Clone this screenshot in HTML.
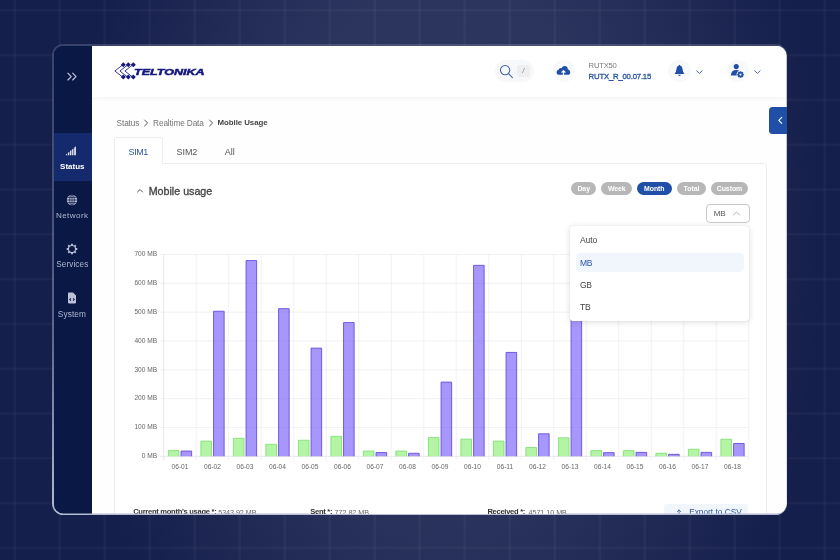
<!DOCTYPE html>
<html lang="en">
<head>
<meta charset="utf-8">
<title>Mobile Usage - Teltonika</title>
<style>
*{box-sizing:border-box;margin:0;padding:0}
html,body{width:840px;height:560px;overflow:hidden}
body{position:relative;font-family:"Liberation Sans",sans-serif;background:#151f4b;color:#444}
.abs{position:absolute}
#bg{position:absolute;left:0;top:0;width:840px;height:560px;
 background:radial-gradient(ellipse 375px 600px at 448px 235px, #2e3760 0%, #2c355e 42%, #1e2853 76%, #151f4b 100%)}
#grid{position:absolute;left:0;top:0;width:840px;height:560px}
#winborder{position:absolute;left:51.8px;top:44.4px;width:735.3px;height:470.8px;border-radius:11.5px;
 background:linear-gradient(to bottom, rgba(200,206,230,.20) 0%, rgba(200,206,230,.28) 33%, rgba(200,206,230,.42) 63%, rgba(210,215,235,.85) 100%)}
#win{position:absolute;left:0;top:0;width:840px;height:560px;overflow:hidden;will-change:transform;
 clip-path:inset(45.8px 53.30px 46.40px 53.8px round 9.5px 10px 10px 9.5px)}
#side{position:absolute;left:53.8px;top:45.8px;width:38.20px;height:467.80px;background:#0a1846}
#main{position:absolute;left:92.0px;top:45.8px;width:694.70px;height:467.80px;background:#fefefe}
#header{position:absolute;left:92.0px;top:45.8px;width:694.70px;height:51.2px;background:#fff;box-shadow:0 1px 5px rgba(0,0,0,.055)}
.t{position:absolute;white-space:nowrap;line-height:1}
.pill{height:13.1px;border-radius:6.6px;color:#fff;font-weight:700;font-size:6.95px;line-height:13.1px;text-align:center;letter-spacing:-.05px}
</style>
</head>
<body>
<div id="bg"></div>
<svg id="grid" viewBox="0 0 840 560"><g stroke="#ffffff" stroke-opacity=".036" stroke-width="2.6" style="filter:blur(.7px)"><line x1="14.7" y1="0" x2="14.7" y2="560"/><line x1="59.7" y1="0" x2="59.7" y2="560"/><line x1="104.7" y1="0" x2="104.7" y2="560"/><line x1="149.7" y1="0" x2="149.7" y2="560"/><line x1="194.7" y1="0" x2="194.7" y2="560"/><line x1="239.7" y1="0" x2="239.7" y2="560"/><line x1="284.7" y1="0" x2="284.7" y2="560"/><line x1="329.7" y1="0" x2="329.7" y2="560"/><line x1="374.7" y1="0" x2="374.7" y2="560"/><line x1="419.7" y1="0" x2="419.7" y2="560"/><line x1="464.7" y1="0" x2="464.7" y2="560"/><line x1="509.7" y1="0" x2="509.7" y2="560"/><line x1="554.7" y1="0" x2="554.7" y2="560"/><line x1="599.7" y1="0" x2="599.7" y2="560"/><line x1="644.7" y1="0" x2="644.7" y2="560"/><line x1="689.7" y1="0" x2="689.7" y2="560"/><line x1="734.7" y1="0" x2="734.7" y2="560"/><line x1="779.7" y1="0" x2="779.7" y2="560"/><line x1="824.7" y1="0" x2="824.7" y2="560"/><line x1="0" y1="10.3" x2="840" y2="10.3"/><line x1="0" y1="55.1" x2="840" y2="55.1"/><line x1="0" y1="99.9" x2="840" y2="99.9"/><line x1="0" y1="144.7" x2="840" y2="144.7"/><line x1="0" y1="189.5" x2="840" y2="189.5"/><line x1="0" y1="234.3" x2="840" y2="234.3"/><line x1="0" y1="279.1" x2="840" y2="279.1"/><line x1="0" y1="323.9" x2="840" y2="323.9"/><line x1="0" y1="368.7" x2="840" y2="368.7"/><line x1="0" y1="413.5" x2="840" y2="413.5"/><line x1="0" y1="458.3" x2="840" y2="458.3"/><line x1="0" y1="503.1" x2="840" y2="503.1"/><line x1="0" y1="547.9" x2="840" y2="547.9"/></g></svg>
<div id="winborder"></div>
<div id="win">
<div id="main"></div>
<div id="content">
<div class="t" style="left:116.60px;top:118.57px;font-size:8.3px;color:#767676;letter-spacing:-0.15px;">Status</div>
<svg class="abs" style="left:143.30px;top:118.90px;" width="6" height="8" viewBox="0 0 6 8"><path d="M1.6 1 L4.6 4 L1.6 7" fill="none" stroke="#555" stroke-width="1" stroke-linecap="round" stroke-linejoin="round"/></svg>
<div class="t" style="left:153.10px;top:118.57px;font-size:8.3px;color:#767676;letter-spacing:-0.15px;">Realtime Data</div>
<svg class="abs" style="left:208.00px;top:118.90px;" width="6" height="8" viewBox="0 0 6 8"><path d="M1.6 1 L4.6 4 L1.6 7" fill="none" stroke="#555" stroke-width="1" stroke-linecap="round" stroke-linejoin="round"/></svg>
<div class="t" style="left:217.60px;top:118.95px;font-size:7.85px;color:#444;font-weight:700;letter-spacing:-0.05px;">Mobile Usage</div>
<div class="abs" style="left:114.10px;top:163.00px;width:653.10px;height:397.00px;background:#fff;border:1px solid #ededf0;border-radius:0 3px 0 0"></div>
<div class="abs" style="left:114.10px;top:137.40px;width:49.10px;height:26.80px;background:#fff;border:1px solid #ededf0;border-bottom:none;border-radius:3px 3px 0 0"></div>
<div class="t" style="left:128.60px;top:147.68px;font-size:9.0px;color:#2a55a4;letter-spacing:-0.42px;">SIM1</div>
<div class="t" style="left:176.60px;top:147.68px;font-size:9.0px;color:#555;letter-spacing:-0.1px;">SIM2</div>
<div class="t" style="left:224.80px;top:147.68px;font-size:9.0px;color:#555;">All</div>
<svg class="abs" style="left:135.80px;top:186.80px;" width="8" height="7" viewBox="0 0 8 7"><path d="M1.5 5.0 L4 2.5 L6.5 5.0" fill="none" stroke="#444" stroke-width=".95" stroke-linecap="round" stroke-linejoin="round"/></svg>
<div class="t" style="left:148.70px;top:185.74px;font-size:10.7px;color:#444;-webkit-text-stroke:.32px #444;">Mobile usage</div>
<div class="abs pill" style="left:571.00px;top:182.10px;width:25.40px;background:#b7b7b7">Day</div>
<div class="abs pill" style="left:601.20px;top:182.10px;width:31.20px;background:#b7b7b7">Week</div>
<div class="abs pill" style="left:636.90px;top:182.10px;width:34.80px;background:#1f4fa6">Month</div>
<div class="abs pill" style="left:676.90px;top:182.10px;width:29.10px;background:#b7b7b7">Total</div>
<div class="abs pill" style="left:710.70px;top:182.10px;width:37.60px;background:#b7b7b7">Custom</div>
<div class="abs" style="left:706.30px;top:204.20px;width:43.30px;height:18.50px;background:#fff;border:1px solid #c9c9cd;border-radius:4px"></div>
<div class="t" style="left:713.70px;top:210.04px;font-size:8.1px;color:#555;letter-spacing:-0.1px;">MB</div>
<svg class="abs" style="left:732.30px;top:209.60px;" width="9" height="7" viewBox="0 0 9 7"><path d="M1.4 4.9 L4.5 2.1 L7.6 4.9" fill="none" stroke="#a0a0a0" stroke-width=".8" stroke-linecap="round" stroke-linejoin="round"/></svg>
<svg class="abs" style="left:0;top:0" width="840" height="560" viewBox="0 0 840 560"><line x1="159.55" y1="456.30" x2="748.75" y2="456.30" stroke="#d9d9d9" stroke-width=".6"/><line x1="159.55" y1="427.47" x2="748.75" y2="427.47" stroke="#e9e9e9" stroke-width=".6"/><line x1="159.55" y1="398.64" x2="748.75" y2="398.64" stroke="#e9e9e9" stroke-width=".6"/><line x1="159.55" y1="369.81" x2="748.75" y2="369.81" stroke="#e9e9e9" stroke-width=".6"/><line x1="159.55" y1="340.99" x2="748.75" y2="340.99" stroke="#e9e9e9" stroke-width=".6"/><line x1="159.55" y1="312.16" x2="748.75" y2="312.16" stroke="#e9e9e9" stroke-width=".6"/><line x1="159.55" y1="283.33" x2="748.75" y2="283.33" stroke="#e9e9e9" stroke-width=".6"/><line x1="159.55" y1="254.50" x2="748.75" y2="254.50" stroke="#e9e9e9" stroke-width=".6"/><line x1="163.75" y1="254.50" x2="163.75" y2="460.50" stroke="#d9d9d9" stroke-width=".6"/><line x1="196.25" y1="254.50" x2="196.25" y2="460.50" stroke="#e9e9e9" stroke-width=".6"/><line x1="228.75" y1="254.50" x2="228.75" y2="460.50" stroke="#e9e9e9" stroke-width=".6"/><line x1="261.25" y1="254.50" x2="261.25" y2="460.50" stroke="#e9e9e9" stroke-width=".6"/><line x1="293.75" y1="254.50" x2="293.75" y2="460.50" stroke="#e9e9e9" stroke-width=".6"/><line x1="326.25" y1="254.50" x2="326.25" y2="460.50" stroke="#e9e9e9" stroke-width=".6"/><line x1="358.75" y1="254.50" x2="358.75" y2="460.50" stroke="#e9e9e9" stroke-width=".6"/><line x1="391.25" y1="254.50" x2="391.25" y2="460.50" stroke="#e9e9e9" stroke-width=".6"/><line x1="423.75" y1="254.50" x2="423.75" y2="460.50" stroke="#e9e9e9" stroke-width=".6"/><line x1="456.25" y1="254.50" x2="456.25" y2="460.50" stroke="#e9e9e9" stroke-width=".6"/><line x1="488.75" y1="254.50" x2="488.75" y2="460.50" stroke="#e9e9e9" stroke-width=".6"/><line x1="521.25" y1="254.50" x2="521.25" y2="460.50" stroke="#e9e9e9" stroke-width=".6"/><line x1="553.75" y1="254.50" x2="553.75" y2="460.50" stroke="#e9e9e9" stroke-width=".6"/><line x1="586.25" y1="254.50" x2="586.25" y2="460.50" stroke="#e9e9e9" stroke-width=".6"/><line x1="618.75" y1="254.50" x2="618.75" y2="460.50" stroke="#e9e9e9" stroke-width=".6"/><line x1="651.25" y1="254.50" x2="651.25" y2="460.50" stroke="#e9e9e9" stroke-width=".6"/><line x1="683.75" y1="254.50" x2="683.75" y2="460.50" stroke="#e9e9e9" stroke-width=".6"/><line x1="716.25" y1="254.50" x2="716.25" y2="460.50" stroke="#e9e9e9" stroke-width=".6"/><line x1="748.75" y1="254.50" x2="748.75" y2="460.50" stroke="#e9e9e9" stroke-width=".6"/><rect x="168.40" y="450.56" width="10.60" height="5.74" fill="rgba(150,240,130,.72)"/><path d="M168.40 456.30 V450.56 H179.00 V456.30" fill="none" stroke="#7de070" stroke-width=".85"/><rect x="181.05" y="451.05" width="10.60" height="5.25" fill="rgba(120,95,250,.65)"/><path d="M181.05 456.30 V451.05 H191.65 V456.30" fill="none" stroke="#6446dc" stroke-width=".85"/><rect x="200.90" y="441.12" width="10.60" height="15.18" fill="rgba(150,240,130,.72)"/><path d="M200.90 456.30 V441.12 H211.50 V456.30" fill="none" stroke="#7de070" stroke-width=".85"/><rect x="213.55" y="311.26" width="10.60" height="145.04" fill="rgba(120,95,250,.65)"/><path d="M213.55 456.30 V311.26 H224.15 V456.30" fill="none" stroke="#6446dc" stroke-width=".85"/><rect x="233.40" y="438.29" width="10.60" height="18.01" fill="rgba(150,240,130,.72)"/><path d="M233.40 456.30 V438.29 H244.00 V456.30" fill="none" stroke="#7de070" stroke-width=".85"/><rect x="246.05" y="260.58" width="10.60" height="195.72" fill="rgba(120,95,250,.65)"/><path d="M246.05 456.30 V260.58 H256.65 V456.30" fill="none" stroke="#6446dc" stroke-width=".85"/><rect x="265.90" y="444.28" width="10.60" height="12.02" fill="rgba(150,240,130,.72)"/><path d="M265.90 456.30 V444.28 H276.50 V456.30" fill="none" stroke="#7de070" stroke-width=".85"/><rect x="278.55" y="308.67" width="10.60" height="147.63" fill="rgba(120,95,250,.65)"/><path d="M278.55 456.30 V308.67 H289.15 V456.30" fill="none" stroke="#6446dc" stroke-width=".85"/><rect x="298.40" y="440.25" width="10.60" height="16.05" fill="rgba(150,240,130,.72)"/><path d="M298.40 456.30 V440.25 H309.00 V456.30" fill="none" stroke="#7de070" stroke-width=".85"/><rect x="311.05" y="348.11" width="10.60" height="108.19" fill="rgba(120,95,250,.65)"/><path d="M311.05 456.30 V348.11 H321.65 V456.30" fill="none" stroke="#6446dc" stroke-width=".85"/><rect x="330.90" y="436.31" width="10.60" height="19.99" fill="rgba(150,240,130,.72)"/><path d="M330.90 456.30 V436.31 H341.50 V456.30" fill="none" stroke="#7de070" stroke-width=".85"/><rect x="343.55" y="322.58" width="10.60" height="133.72" fill="rgba(120,95,250,.65)"/><path d="M343.55 456.30 V322.58 H354.15 V456.30" fill="none" stroke="#6446dc" stroke-width=".85"/><rect x="363.40" y="451.05" width="10.60" height="5.25" fill="rgba(150,240,130,.72)"/><path d="M363.40 456.30 V451.05 H374.00 V456.30" fill="none" stroke="#7de070" stroke-width=".85"/><rect x="376.05" y="452.55" width="10.60" height="3.75" fill="rgba(120,95,250,.65)"/><path d="M376.05 456.30 V452.55 H386.65 V456.30" fill="none" stroke="#6446dc" stroke-width=".85"/><rect x="395.90" y="451.05" width="10.60" height="5.25" fill="rgba(150,240,130,.72)"/><path d="M395.90 456.30 V451.05 H406.50 V456.30" fill="none" stroke="#7de070" stroke-width=".85"/><rect x="408.55" y="453.30" width="10.60" height="3.00" fill="rgba(120,95,250,.65)"/><path d="M408.55 456.30 V453.30 H419.15 V456.30" fill="none" stroke="#6446dc" stroke-width=".85"/><rect x="428.40" y="437.55" width="10.60" height="18.75" fill="rgba(150,240,130,.72)"/><path d="M428.40 456.30 V437.55 H439.00 V456.30" fill="none" stroke="#7de070" stroke-width=".85"/><rect x="441.05" y="382.09" width="10.60" height="74.21" fill="rgba(120,95,250,.65)"/><path d="M441.05 456.30 V382.09 H451.65 V456.30" fill="none" stroke="#6446dc" stroke-width=".85"/><rect x="460.90" y="439.10" width="10.60" height="17.20" fill="rgba(150,240,130,.72)"/><path d="M460.90 456.30 V439.10 H471.50 V456.30" fill="none" stroke="#7de070" stroke-width=".85"/><rect x="473.55" y="265.34" width="10.60" height="190.96" fill="rgba(120,95,250,.65)"/><path d="M473.55 456.30 V265.34 H484.15 V456.30" fill="none" stroke="#6446dc" stroke-width=".85"/><rect x="493.40" y="441.12" width="10.60" height="15.18" fill="rgba(150,240,130,.72)"/><path d="M493.40 456.30 V441.12 H504.00 V456.30" fill="none" stroke="#7de070" stroke-width=".85"/><rect x="506.05" y="352.43" width="10.60" height="103.87" fill="rgba(120,95,250,.65)"/><path d="M506.05 456.30 V352.43 H516.65 V456.30" fill="none" stroke="#6446dc" stroke-width=".85"/><rect x="525.90" y="447.51" width="10.60" height="8.79" fill="rgba(150,240,130,.72)"/><path d="M525.90 456.30 V447.51 H536.50 V456.30" fill="none" stroke="#7de070" stroke-width=".85"/><rect x="538.55" y="433.80" width="10.60" height="22.50" fill="rgba(120,95,250,.65)"/><path d="M538.55 456.30 V433.80 H549.15 V456.30" fill="none" stroke="#6446dc" stroke-width=".85"/><rect x="558.40" y="437.80" width="10.60" height="18.50" fill="rgba(150,240,130,.72)"/><path d="M558.40 456.30 V437.80 H569.00 V456.30" fill="none" stroke="#7de070" stroke-width=".85"/><rect x="571.05" y="300.00" width="10.60" height="156.30" fill="rgba(120,95,250,.65)"/><path d="M571.05 456.30 V300.00 H581.65 V456.30" fill="none" stroke="#6446dc" stroke-width=".85"/><rect x="590.90" y="450.65" width="10.60" height="5.65" fill="rgba(150,240,130,.72)"/><path d="M590.90 456.30 V450.65 H601.50 V456.30" fill="none" stroke="#7de070" stroke-width=".85"/><rect x="603.55" y="452.66" width="10.60" height="3.64" fill="rgba(120,95,250,.65)"/><path d="M603.55 456.30 V452.66 H614.15 V456.30" fill="none" stroke="#6446dc" stroke-width=".85"/><rect x="623.40" y="450.65" width="10.60" height="5.65" fill="rgba(150,240,130,.72)"/><path d="M623.40 456.30 V450.65 H634.00 V456.30" fill="none" stroke="#7de070" stroke-width=".85"/><rect x="636.05" y="452.37" width="10.60" height="3.93" fill="rgba(120,95,250,.65)"/><path d="M636.05 456.30 V452.37 H646.65 V456.30" fill="none" stroke="#6446dc" stroke-width=".85"/><rect x="655.90" y="453.24" width="10.60" height="3.06" fill="rgba(150,240,130,.72)"/><path d="M655.90 456.30 V453.24 H666.50 V456.30" fill="none" stroke="#7de070" stroke-width=".85"/><rect x="668.55" y="454.36" width="10.60" height="1.94" fill="rgba(120,95,250,.65)"/><path d="M668.55 456.30 V454.36 H679.15 V456.30" fill="none" stroke="#6446dc" stroke-width=".85"/><rect x="688.40" y="449.24" width="10.60" height="7.06" fill="rgba(150,240,130,.72)"/><path d="M688.40 456.30 V449.24 H699.00 V456.30" fill="none" stroke="#7de070" stroke-width=".85"/><rect x="701.05" y="452.37" width="10.60" height="3.93" fill="rgba(120,95,250,.65)"/><path d="M701.05 456.30 V452.37 H711.65 V456.30" fill="none" stroke="#6446dc" stroke-width=".85"/><rect x="720.90" y="439.24" width="10.60" height="17.06" fill="rgba(150,240,130,.72)"/><path d="M720.90 456.30 V439.24 H731.50 V456.30" fill="none" stroke="#7de070" stroke-width=".85"/><rect x="733.55" y="443.51" width="10.60" height="12.79" fill="rgba(120,95,250,.65)"/><path d="M733.55 456.30 V443.51 H744.15 V456.30" fill="none" stroke="#6446dc" stroke-width=".85"/><g font-family="Liberation Sans, sans-serif" font-size="6.6" fill="#666"><text x="157.15" y="458.10" text-anchor="end">0 MB</text><text x="157.15" y="429.27" text-anchor="end">100 MB</text><text x="157.15" y="400.44" text-anchor="end">200 MB</text><text x="157.15" y="371.61" text-anchor="end">300 MB</text><text x="157.15" y="342.79" text-anchor="end">400 MB</text><text x="157.15" y="313.96" text-anchor="end">500 MB</text><text x="157.15" y="285.13" text-anchor="end">600 MB</text><text x="157.15" y="256.30" text-anchor="end">700 MB</text><text x="180.00" y="469.20" text-anchor="middle">06-01</text><text x="212.50" y="469.20" text-anchor="middle">06-02</text><text x="245.00" y="469.20" text-anchor="middle">06-03</text><text x="277.50" y="469.20" text-anchor="middle">06-04</text><text x="310.00" y="469.20" text-anchor="middle">06-05</text><text x="342.50" y="469.20" text-anchor="middle">06-06</text><text x="375.00" y="469.20" text-anchor="middle">06-07</text><text x="407.50" y="469.20" text-anchor="middle">06-08</text><text x="440.00" y="469.20" text-anchor="middle">06-09</text><text x="472.50" y="469.20" text-anchor="middle">06-10</text><text x="505.00" y="469.20" text-anchor="middle">06-11</text><text x="537.50" y="469.20" text-anchor="middle">06-12</text><text x="570.00" y="469.20" text-anchor="middle">06-13</text><text x="602.50" y="469.20" text-anchor="middle">06-14</text><text x="635.00" y="469.20" text-anchor="middle">06-15</text><text x="667.50" y="469.20" text-anchor="middle">06-16</text><text x="700.00" y="469.20" text-anchor="middle">06-17</text><text x="732.50" y="469.20" text-anchor="middle">06-18</text></g></svg>
<div class="abs" style="left:570.40px;top:225.70px;width:178.40px;height:95.70px;background:#fff;border-radius:3px;box-shadow:0 1px 6px rgba(0,0,0,.14),0 0 1px rgba(0,0,0,.14)"></div>
<div class="abs" style="left:576.00px;top:252.50px;width:168.00px;height:19.30px;background:#f1f6fd;border-radius:4.5px"></div>
<div class="t" style="left:580.00px;top:236.20px;font-size:8.5px;color:#444;letter-spacing:-0.1px;">Auto</div>
<div class="t" style="left:580.00px;top:258.50px;font-size:8.5px;color:#2a55a4;letter-spacing:-0.3px;">MB</div>
<div class="t" style="left:580.00px;top:280.60px;font-size:8.5px;color:#444;letter-spacing:-0.3px;">GB</div>
<div class="t" style="left:580.00px;top:302.80px;font-size:8.5px;color:#444;letter-spacing:-0.3px;">TB</div>
<div class="t" style="left:133.20px;top:508.17px;font-size:7.6px;color:#333;font-weight:700;letter-spacing:-0.3px;">Current month's usage *:</div>
<div class="t" style="left:218.20px;top:508.51px;font-size:7.2px;color:#666;letter-spacing:-0.05px;">5343.92 MB</div>
<div class="t" style="left:310.30px;top:508.17px;font-size:7.6px;color:#333;font-weight:700;letter-spacing:-0.3px;">Sent *:</div>
<div class="t" style="left:334.60px;top:508.51px;font-size:7.2px;color:#666;letter-spacing:-0.05px;">772.82 MB</div>
<div class="t" style="left:487.40px;top:508.17px;font-size:7.6px;color:#333;font-weight:700;letter-spacing:-0.3px;">Received *:</div>
<div class="t" style="left:528.60px;top:508.51px;font-size:7.2px;color:#666;letter-spacing:-0.05px;">4571.10 MB</div>
<div class="abs" style="left:664.30px;top:504.10px;width:84.00px;height:25.90px;background:#f1f5fc;border-radius:3px"></div>
<svg class="abs" style="left:674.70px;top:507.50px;" width="8" height="10" viewBox="0 0 8 10"><path d="M4 8.5 V2 M2.3 3.7 L4 1.9 L5.7 3.7" fill="none" stroke="#2a55a4" stroke-width=".75" stroke-linecap="round" stroke-linejoin="round"/></svg>
<div class="t" style="left:689.20px;top:508.27px;font-size:8.3px;color:#2a55a4;">Export to CSV</div>
<div class="abs" style="left:768.90px;top:107.00px;width:21.10px;height:26.60px;background:#1f4fa6;border-radius:3.5px 0 0 3.5px"></div>
<svg class="abs" style="left:775.50px;top:115.00px;" width="8" height="11" viewBox="0 0 8 11"><path d="M5.7 2.4 L2.8 5.35 L5.7 8.3" fill="none" stroke="#fff" stroke-width="1.15" stroke-linecap="round" stroke-linejoin="round"/></svg>
</div>
<div id="header"></div>
<div id="hd">
<svg class="abs" style="left:112.30px;top:60.90px;" width="26" height="20" viewBox="0 0 26 20"><path d="M10.90 3.7 L2.90 10 L10.90 16.3" fill="none" stroke="#16197e" stroke-width=".85"/><path d="M8.80 3.7 L11.30 1.2000000000000002 L13.80 3.7 L11.30 6.2Z" fill="#16197e"/><path d="M8.80 16.1 L11.30 13.600000000000001 L13.80 16.1 L11.30 18.6Z" fill="#16197e"/><path d="M15.90 3.7 L7.90 10 L15.90 16.3" fill="none" stroke="#16197e" stroke-width=".85"/><path d="M13.80 3.7 L16.30 1.2000000000000002 L18.80 3.7 L16.30 6.2Z" fill="#16197e"/><path d="M13.80 16.1 L16.30 13.600000000000001 L18.80 16.1 L16.30 18.6Z" fill="#16197e"/><path d="M20.90 3.7 L12.90 10 L20.90 16.3" fill="none" stroke="#16197e" stroke-width=".85"/><path d="M18.80 3.7 L21.30 1.2000000000000002 L23.80 3.7 L21.30 6.2Z" fill="#16197e"/><path d="M18.80 16.1 L21.30 13.600000000000001 L23.80 16.1 L21.30 18.6Z" fill="#16197e"/></svg>
<div class="t" style="left:133.90px;top:66.92px;font-size:9.9px;color:#16197e;font-weight:700;font-style:italic;transform:scaleX(1.27);transform-origin:0 50%;-webkit-text-stroke:.55px #16197e;">TELTONIKA</div>
<div class="abs" style="left:495.40px;top:60.10px;width:38.90px;height:21.80px;background:#f7f8fa;border-radius:11px"></div>
<svg class="abs" style="left:498.00px;top:62.50px;" width="17" height="17" viewBox="0 0 17 17"><g fill="none" stroke="#3f64ab" stroke-width="1.05" stroke-linecap="round"><circle cx="7.1" cy="7.1" r="4.7"/><path d="M10.5 10.6 L14.4 14.6"/></g></svg>
<div class="abs" style="left:517.10px;top:64.90px;width:12.80px;height:11.90px;background:#eeeef0;border-radius:3px"></div>
<div class="t" style="left:523.50px;top:67.71px;font-size:6.6px;color:#777;transform:translateX(-50%);font-style:italic;">/</div>
<div class="abs" style="left:552.60px;top:60.00px;width:22.40px;height:22.40px;background:#f8f9fa;border-radius:50%"></div>
<svg class="abs" style="left:556.40px;top:65.40px;" width="15" height="11" viewBox="0 0 15 11"><path d="M3.6 9.8 Q0.6 9.8 0.6 7.2 Q0.6 5.1 2.7 4.7 Q2.9 2.9 4.6 2.9 Q5.1 2.9 5.5 3.2 Q6.4 1 8.7 1 Q11.6 1 11.8 4.3 Q14.2 4.7 14.2 7.2 Q14.2 9.8 11.5 9.8Z" fill="#1f4fa6"/><path d="M7.5 9.9 V6.2 M5.6 7.6 L7.5 5.6 L9.4 7.6" fill="none" stroke="#fff" stroke-width="1.2" stroke-linejoin="round"/></svg>
<div class="t" style="left:588.60px;top:62.08px;font-size:7.7px;color:#7b7b7b;letter-spacing:-0.25px;">RUTX50</div>
<div class="t" style="left:588.60px;top:73.34px;font-size:7.75px;color:#2a55a4;-webkit-text-stroke:.32px #2a55a4;letter-spacing:-0.2px;">RUTX_R_00.07.15</div>
<div class="abs" style="left:668.40px;top:59.90px;width:22.40px;height:22.40px;background:#f8f9fa;border-radius:50%"></div>
<svg class="abs" style="left:674.20px;top:64.30px;" width="11" height="13" viewBox="0 0 11 13"><path d="M5.5 0.7 Q6.1 0.7 6.15 1.4 Q8.5 2.0 8.6 5.2 Q8.7 7.8 10.2 9.2 Q10.5 10.0 9.6 10.0 H1.4 Q0.5 10.0 0.8 9.2 Q2.3 7.8 2.4 5.2 Q2.5 2.0 4.85 1.4 Q4.9 0.7 5.5 0.7Z" fill="#1f4fa6"/><path d="M4.3 10.7 H6.7 Q6.6 12.1 5.5 12.1 Q4.4 12.1 4.3 10.7Z" fill="#1f4fa6"/></svg>
<svg class="abs" style="left:695.10px;top:68.60px;" width="9" height="6" viewBox="0 0 9 6"><path d="M1.7 1.8 L4.4 4.4 L7.1 1.8" fill="none" stroke="#4763aa" stroke-width="1.0" stroke-linecap="round" stroke-linejoin="round"/></svg>
<div class="abs" style="left:726.50px;top:59.90px;width:22.40px;height:22.40px;background:#f8f9fa;border-radius:50%"></div>
<svg class="abs" style="left:730.40px;top:63.00px;" width="15" height="16" viewBox="0 0 15 16"><circle cx="6.25" cy="3.6" r="2.55" fill="#1f4fa6"/><path d="M0.9 12.6 Q0.9 6.9 6.2 6.9 Q8.3 6.9 9.6 7.9 L7.2 12.6Z" fill="#1f4fa6"/><circle cx="10.5" cy="11.6" r="3.9" fill="#f8f9fa"/><circle cx="10.5" cy="11.6" r="2.65" fill="#1f4fa6"/><g stroke="#1f4fa6" stroke-width="1.6"><path d="M10.5 8.35 V14.85 M7.25 11.6 H13.75 M8.2 9.3 L12.8 13.9 M8.2 13.9 L12.8 9.3"/></g><circle cx="10.5" cy="11.6" r="1.05" fill="#f8f9fa"/></svg>
<svg class="abs" style="left:752.90px;top:68.60px;" width="9" height="6" viewBox="0 0 9 6"><path d="M1.7 1.8 L4.4 4.4 L7.1 1.8" fill="none" stroke="#4763aa" stroke-width="1.0" stroke-linecap="round" stroke-linejoin="round"/></svg>
</div>
<div id="side"></div>
<div id="sd">
<svg class="abs" style="left:66.00px;top:71.00px;" width="13" height="11" viewBox="0 0 13 11"><g fill="none" stroke="#c3c9de" stroke-width="1.15" stroke-linecap="round" stroke-linejoin="round"><path d="M1.9 2.2 L5.2 5.6 L1.9 9.0"/><path d="M6.7 2.2 L10.0 5.6 L6.7 9.0"/></g></svg>
<div class="abs" style="left:53.80px;top:133.00px;width:38.20px;height:48.30px;background:#15296d"></div>
<svg class="abs" style="left:66.00px;top:145.60px;" width="11" height="10" viewBox="0 0 11 10"><g fill="#fff"><path d="M0.1 9.3 L0.1 8.52 L1.2 7.59 L1.2 9.3Z"/><path d="M2.1 9.3 L2.1 6.84 L3.3 5.83 L3.3 9.3Z"/><path d="M4.15 9.3 L4.15 5.11 L5.35 4.11 L5.35 9.3Z"/><path d="M6.2 9.3 L6.2 3.39 L7.4 2.38 L7.4 9.3Z"/><path d="M8.25 9.3 L8.25 1.67 L9.8 0.37 L9.8 9.3Z"/></g></svg>
<div class="t" style="left:72.30px;top:162.53px;font-size:8.0px;color:#fff;font-weight:700;transform:translateX(-50%);">Status</div>
<svg class="abs" style="left:66.30px;top:193.60px;" width="12" height="12" viewBox="0 0 12 12"><circle cx="6" cy="6" r="5.2" fill="#b7bdd4"/><g fill="none" stroke="#0a1846" stroke-width=".7"><ellipse cx="6" cy="6" rx="2.3" ry="5.2"/><path d="M0.8 6 H11.2 M6 0.8 V11.2 M1.5 3.4 H10.5 M1.5 8.6 H10.5"/></g></svg>
<div class="t" style="left:72.20px;top:212.44px;font-size:8.1px;color:#b0b7d0;letter-spacing:0.42px;transform:translateX(-50%);">Network</div>
<svg class="abs" style="left:66.10px;top:243.30px;" width="12" height="12" viewBox="0 0 12 12"><g fill="none" stroke="#b9c0d8"><circle cx="6" cy="6" r="3.55" stroke-width="1.15"/><g stroke-width="1.9" stroke-linecap="butt"><path d="M6 0.7 V2.1 M6 9.9 V11.3 M0.7 6 H2.1 M9.9 6 H11.3 M2.25 2.25 L3.25 3.25 M8.75 8.75 L9.75 9.75 M2.25 9.75 L3.25 8.75 M8.75 3.25 L9.75 2.25"/></g></g></svg>
<div class="t" style="left:72.30px;top:260.66px;font-size:8.2px;color:#b0b7d0;letter-spacing:0.1px;transform:translateX(-50%);">Services</div>
<svg class="abs" style="left:67.30px;top:292.00px;" width="10" height="12" viewBox="0 0 10 12"><path d="M1.2 0.6 H6 L9 3.6 V10.6 Q9 11.4 8.2 11.4 H1.8 Q1 11.4 1 10.6 V1.4 Q1 0.6 1.8 0.6Z" fill="#bcc2da"/><path d="M3.9 6.4 L2.8 7.5 L3.9 8.6 M6.1 6.4 L7.2 7.5 L6.1 8.6" fill="none" stroke="#0a1846" stroke-width="1.05"/></svg>
<div class="t" style="left:71.90px;top:310.07px;font-size:8.3px;color:#b0b7d0;letter-spacing:0.1px;transform:translateX(-50%);">System</div>
</div>
</div>
</body>
</html>
